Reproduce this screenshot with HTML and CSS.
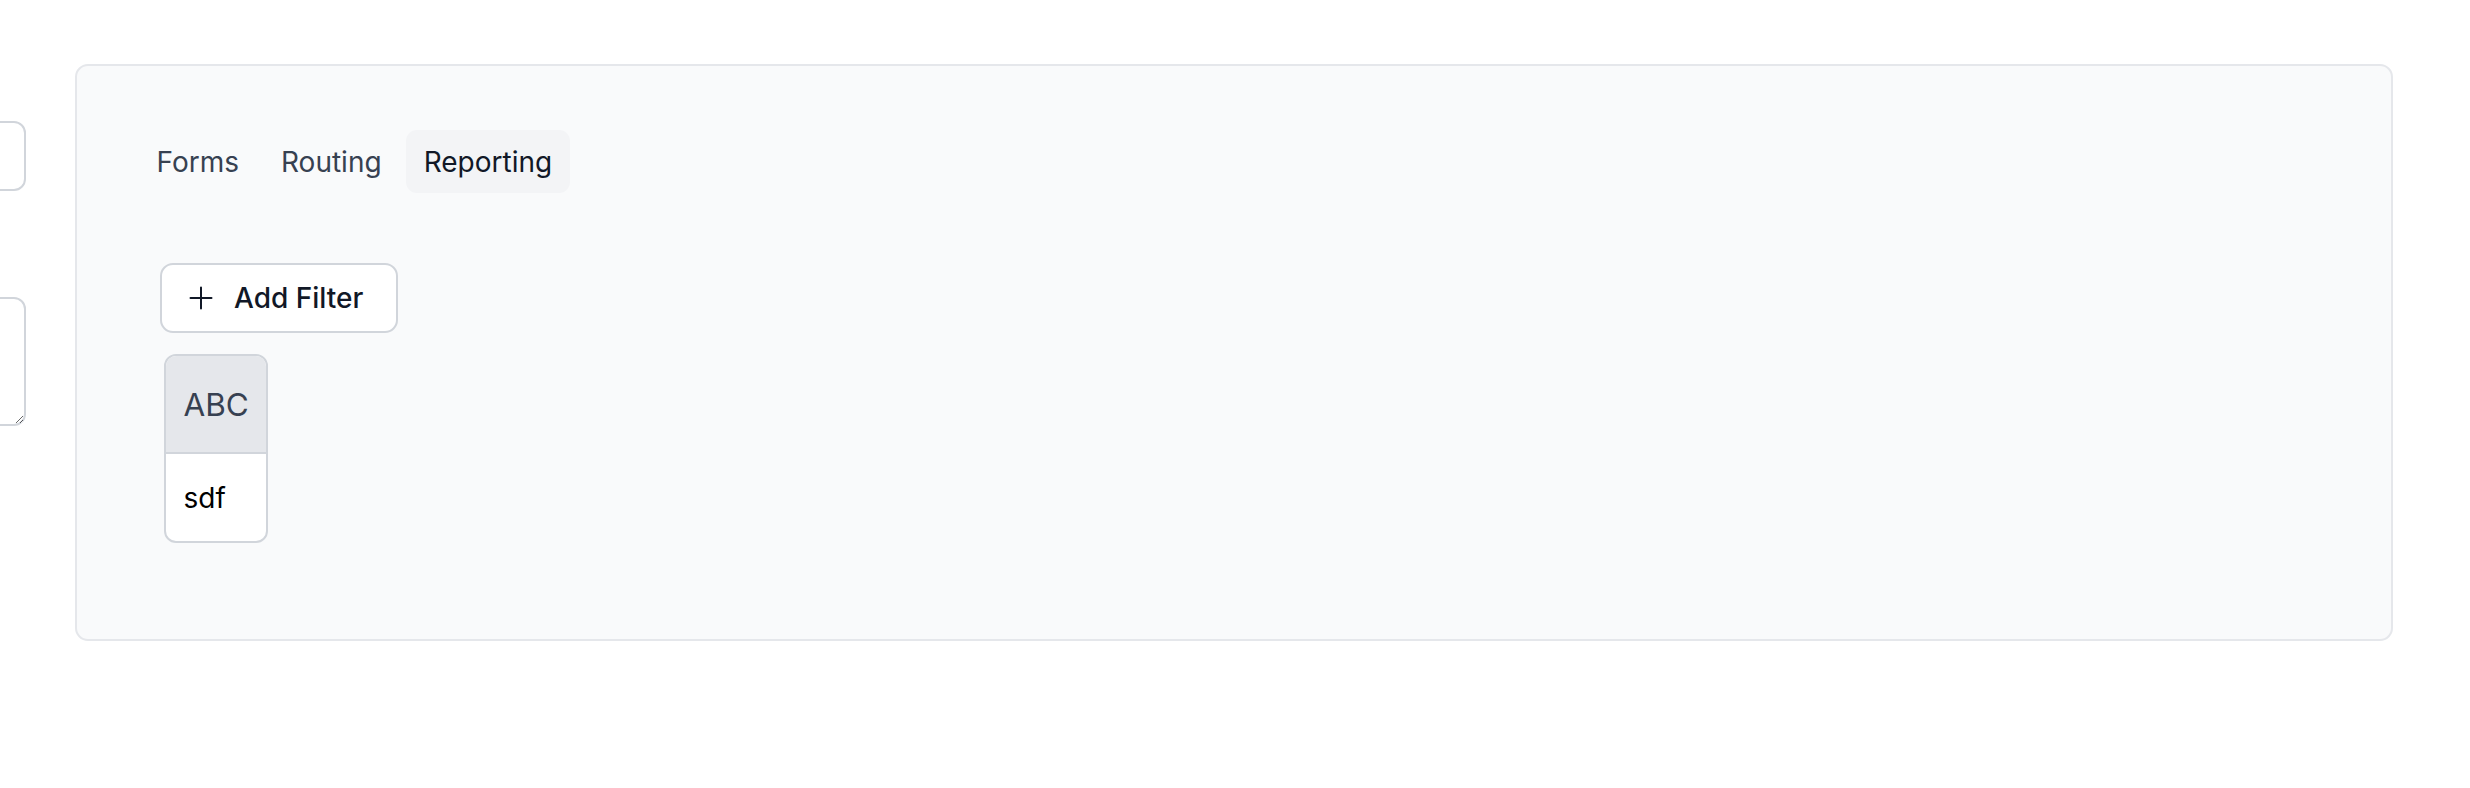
FILE: index.html
```html
<!DOCTYPE html>
<html lang="en">
<head>
<meta charset="utf-8">
<title>Reporting</title>
<link rel="stylesheet" href="styles.css">
</head>
<body>
  <div class="page">
    <aside class="side">
      <input class="field" type="text" aria-label="Name">
      <textarea class="area" aria-label="Description"></textarea>
    </aside>
    <section class="panel">
      <nav class="tabs">
        <span class="tab">Forms</span>
        <span class="tab">Routing</span>
        <span class="tab active">Reporting</span>
      </nav>
      <div class="filters">
        <button class="add-btn" type="button">
          <svg class="plus" width="28" height="28" viewBox="0 0 28 28" fill="none" stroke="#111827" stroke-width="2" stroke-linecap="round"><path d="M14 3.5v21M3.5 14h21"/></svg>
          <span>Add Filter</span>
        </button>
        <div class="col-card">
          <div class="col-head">ABC</div>
          <div class="col-body">sdf</div>
        </div>
      </div>
    </section>
  </div>
</body>
</html>
```
FILE: styles.css
```css
* { box-sizing: border-box; }
html, body { margin: 0; padding: 0; background: #ffffff; }
body {
  font-family: Inter, "Noto Sans", "Liberation Sans", sans-serif;
  width: 2470px;
  height: 788px;
  overflow: hidden;
}
.page {
  display: flex;
  align-items: flex-start;
  gap: 49px;
}
.side {
  width: 400px;
  margin-left: -374px;
  padding-top: 121px;
  display: flex;
  flex-direction: column;
}
.field {
  display: block;
  width: 400px;
  height: 70px;
  border: 2px solid #d1d5db;
  border-radius: 12px;
  background: #fff;
  outline: none;
}
.area {
  display: block;
  width: 400px;
  height: 129px;
  margin-top: 106px;
  border: 2px solid #d1d5db;
  border-radius: 12px;
  background: #fff;
  resize: vertical;
  outline: none;
}
.panel {
  flex: 1;
  margin-top: 64px;
  margin-right: 77px;
  height: 577px;
  background: #f9fafb;
  border: 2px solid #e5e7eb;
  border-radius: 13px;
  padding: 64px 0 0 62px;
}
.tabs {
  display: flex;
  gap: 7px;
}
.tab {
  display: block;
  height: 63px;
  line-height: 64px;
  padding: 0 17.5px;
  border-radius: 11px;
  font-size: 28px;
  font-weight: 400;
  color: #374151;
}
.tab.active {
  background: #f3f4f6;
  color: #111827;
}
.filters {
  margin-top: 70px;
  padding-left: 21px;
  display: flex;
  flex-direction: column;
  align-items: flex-start;
  gap: 21px;
}
.add-btn {
  display: flex;
  align-items: center;
  gap: 19px;
  height: 70px;
  padding: 0 33px 0 25px;
  background: #ffffff;
  border: 2px solid #d1d5db;
  border-radius: 13px;
  font-family: inherit;
  font-size: 28px;
  font-weight: 500;
  color: #111827;
}
.plus { display: block; flex: none; }
.col-card {
  margin-left: 4px;
  border: 2px solid #d1d5db;
  border-radius: 12px;
  overflow: hidden;
  background: #fff;
}
.col-head {
  height: 98px;
  display: flex;
  align-items: center;
  padding: 0 17.5px;
  background: #e5e7eb;
  border-bottom: 2px solid #d1d5db;
  font-size: 31.5px;
  color: #374151;
}
.col-body {
  height: 87px;
  display: flex;
  align-items: center;
  padding: 0 17.5px;
  font-size: 28px;
  color: #000000;
}
```
